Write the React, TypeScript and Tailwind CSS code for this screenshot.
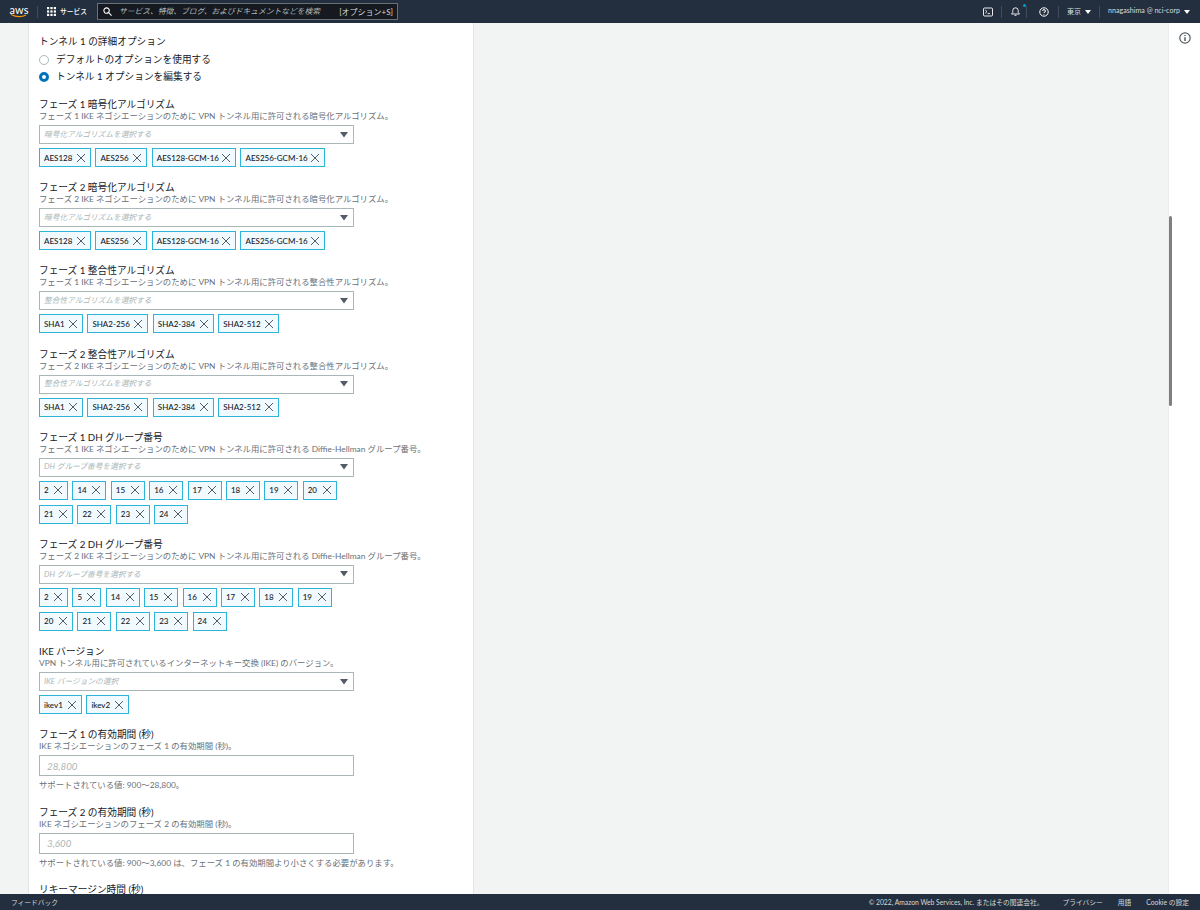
const jp = "font-['Lato','Noto_Sans_CJK_JP',sans-serif]";

function X() {
  return (
    <svg width="10" height="10" viewBox="0 0 10 10" className="shrink-0">
      <path d="M1 1 L9 9 M9 1 L1 9" stroke="#545b64" strokeWidth="1" fill="none" />
    </svg>
  );
}

function Tag({ label, w }: { label: string; w: number }) {
  return (
    <div
      className="flex h-[19px] items-center justify-between whitespace-nowrap border border-[#2cb5d8] bg-[#f1faff] pl-[4px] pr-[4px] text-[8px] font-medium text-[#16191f]"
      style={{ width: w }}
    >
      <span>{label}</span>
      <X />
    </div>
  );
}

function Select({ placeholder }: { placeholder: string }) {
  return (
    <div className="flex h-[19px] w-[315px] items-center justify-between border border-[#aab7b8] bg-white pl-[4px] pr-[5px]">
      <span className="text-[7.7px] italic text-[#aab7b8]">{placeholder}</span>
      <svg width="8" height="6" viewBox="0 0 8 6">
        <path d="M0 0 H8 L4 5.5 Z" fill="#545b64" />
      </svg>
    </div>
  );
}

type T = [string, number];
function Section(props: { title: string; desc: string; ph: string; rows: T[][]; cls: string }) {
  return (
    <section className={props.cls}>
      <h3 className="h-[13px] text-[9.7px] leading-[13px] text-[#16191f]">{props.title}</h3>
      <p className="h-[11px] text-[8.4px] leading-[11px] text-[#687078]">{props.desc}</p>
      <div className="mt-[3px]">
        <Select placeholder={props.ph} />
      </div>
      <div className="mt-[4px] flex flex-col gap-[5px]">
        {props.rows.map((r, i) => (
          <div key={i} className="flex gap-[4.4px]">
            {r.map(([l, w]) => (
              <Tag key={l} label={l} w={w} />
            ))}
          </div>
        ))}
      </div>
    </section>
  );
}

function NumberField(props: { title: string; desc: string; value: string; hint: string; cls: string }) {
  return (
    <section className={props.cls}>
      <h3 className="h-[13px] text-[9.7px] leading-[13px] text-[#16191f]">{props.title}</h3>
      <p className="h-[11px] text-[8.4px] leading-[11px] text-[#687078]">{props.desc}</p>
      <div className="mt-[3px] flex h-[21px] w-[315px] items-center border border-[#aab7b8] bg-white pl-[7px] text-[9.75px] italic text-[#aab7b8]">
        {props.value}
      </div>
      <p className="mt-[4px] h-[11px] text-[8.4px] leading-[11px] text-[#687078]">{props.hint}</p>
    </section>
  );
}

const aes: T[] = [["AES128", 52], ["AES256", 52], ["AES128-GCM-16", 84.3], ["AES256-GCM-16", 84.3]];
const sha: T[] = [["SHA1", 44], ["SHA2-256", 61], ["SHA2-384", 61], ["SHA2-512", 61]];
const n = (a: number[]): T[] => a.map((x) => [String(x), x < 10 ? 29 : 34]);

export default function App() {
  return (
    <div className={`flex h-[910px] w-[1200px] flex-col overflow-hidden bg-[#f2f3f3] ${jp}`}>
      <header className="flex h-[23px] shrink-0 items-center bg-[#232f3e] text-white">
        <div className="ml-[10px] flex w-[18px] flex-col items-center">
          <span className="text-[11px] font-normal leading-[8px]">aws</span>
          <svg width="18" height="4" viewBox="0 0 18 4">
            <path d="M1 0.5 Q9 4.5 16 1" stroke="#ff9900" strokeWidth="1.1" fill="none" />
          </svg>
        </div>
        <div className="ml-[9px] h-[12px] w-px bg-[#414d5c]" />
        <svg width="9" height="9" viewBox="0 0 9 9" className="ml-[9px]" fill="#fff">
          {[0, 3.4, 6.8].flatMap((x) =>
            [0, 3.4, 6.8].map((y) => <rect key={`${x}-${y}`} x={x} y={y} width="2.2" height="2.2" />)
          )}
        </svg>
        <span className="ml-[4px] text-[6.75px] font-medium">サービス</span>
        <div className="ml-[10px] flex h-[17px] w-[301px] items-center border border-[#687078] bg-[#16191f] pl-[5px] pr-[4px]">
          <svg width="9" height="9" viewBox="0 0 10 10" fill="none" stroke="#fff" strokeWidth="1.2">
            <circle cx="4" cy="4" r="3" />
            <path d="M6.3 6.3 L9.5 9.5" />
          </svg>
          <span className="ml-[7px] flex-1 text-[7.75px] italic text-[#aab7b8]">サービス、特徴、ブログ、およびドキュメントなどを検索</span>
          <span className="text-[8px] text-[#d5dbdb]">[オプション+S]</span>
        </div>
        <div className="ml-auto flex items-center">
          <svg width="10" height="10" viewBox="0 0 10 10" fill="none" stroke="#fff" strokeWidth="0.9">
            <rect x="0.5" y="1" width="9" height="8" rx="1" />
            <path d="M2.3 3 L4 4.6 L2.3 6.2 M4.6 6.6 H7" />
          </svg>
          <div className="ml-[8px] mr-[8px] h-[12px] w-px bg-[#414d5c]" />
          <div className="relative">
            <svg width="11" height="11" viewBox="0 0 11 11" fill="none" stroke="#fff" strokeWidth="0.9">
              <path d="M1.5 8 H9.5 L8.2 6.5 V4.5 A2.7 2.7 0 0 0 2.8 4.5 V6.5 Z M4.5 9.3 H6.5" />
            </svg>
            <span className="absolute right-[-5px] top-[-2px] h-[3px] w-[3px] rounded-full bg-[#00a1c9]" />
          </div>
          <div className="ml-[5px] mr-[12px] h-[12px] w-px bg-[#414d5c]" />
          <svg width="10" height="10" viewBox="0 0 10 10" fill="none" stroke="#fff" strokeWidth="1">
            <circle cx="5" cy="5" r="4.2" />
            <path d="M3.6 4 A1.4 1.4 0 1 1 5 5.4 V6.1 M5 7 V7.8" />
          </svg>
          <div className="ml-[9px] mr-[8px] h-[12px] w-px bg-[#414d5c]" />
          <span className="text-[7px] text-[#d5dbdb]">東京</span>
          <svg width="6" height="4" viewBox="0 0 6 4" className="ml-[4px]">
            <path d="M0 0 H6 L3 4 Z" fill="#fff" />
          </svg>
          <div className="ml-[8px] mr-[8px] h-[12px] w-px bg-[#414d5c]" />
          <span className="text-[7.1px] text-[#d5dbdb]">nnagashima @ nci-corp</span>
          <svg width="6" height="4" viewBox="0 0 6 4" className="ml-[4px] mr-[10px]">
            <path d="M0 0 H6 L3 4 Z" fill="#fff" />
          </svg>
        </div>
      </header>

      <div className="relative flex min-h-0 flex-1">
        <main className="flex-1 overflow-hidden pl-[28px]">
          <div className="h-full w-[446px] border-x border-[#e2e5e5] bg-white pl-[10px] pt-[12px]">
            <h2 className="h-[13px] text-[9.7px] leading-[13px] text-[#16191f]">トンネル 1 の詳細オプション</h2>
            <div className="mt-[5px] flex h-[13px] items-center gap-[7px] text-[9.7px] text-[#16191f]">
              <span className="h-[10px] w-[10px] rounded-full border border-[#aab7b8] bg-white" />
              デフォルトのオプションを使用する
            </div>
            <div className="mt-[4px] flex h-[13px] items-center gap-[7px] text-[9.7px] text-[#16191f]">
              <span className="h-[10px] w-[10px] rounded-full border-[3px] border-[#0073bb] bg-white" />
              トンネル 1 オプションを編集する
            </div>

            <Section cls="mt-[15px]" title="フェーズ 1 暗号化アルゴリズム" desc="フェーズ 1 IKE ネゴシエーションのために VPN トンネル用に許可される暗号化アルゴリズム。" ph="暗号化アルゴリズムを選択する" rows={[aes]} />
            <Section cls="mt-[14.2px]" title="フェーズ 2 暗号化アルゴリズム" desc="フェーズ 2 IKE ネゴシエーションのために VPN トンネル用に許可される暗号化アルゴリズム。" ph="暗号化アルゴリズムを選択する" rows={[aes]} />
            <Section cls="mt-[14.2px]" title="フェーズ 1 整合性アルゴリズム" desc="フェーズ 1 IKE ネゴシエーションのために VPN トンネル用に許可される整合性アルゴリズム。" ph="整合性アルゴリズムを選択する" rows={[sha]} />
            <Section cls="mt-[14.2px]" title="フェーズ 2 整合性アルゴリズム" desc="フェーズ 2 IKE ネゴシエーションのために VPN トンネル用に許可される整合性アルゴリズム。" ph="整合性アルゴリズムを選択する" rows={[sha]} />
            <Section cls="mt-[14.2px]" title="フェーズ 1 DH グループ番号" desc="フェーズ 1 IKE ネゴシエーションのために VPN トンネル用に許可される Diffie-Hellman グループ番号。" ph="DH グループ番号を選択する" rows={[n([2, 14, 15, 16, 17, 18, 19, 20]), n([21, 22, 23, 24])]} />
            <Section cls="mt-[14.2px]" title="フェーズ 2 DH グループ番号" desc="フェーズ 2 IKE ネゴシエーションのために VPN トンネル用に許可される Diffie-Hellman グループ番号。" ph="DH グループ番号を選択する" rows={[n([2, 5, 14, 15, 16, 17, 18, 19]), n([20, 21, 22, 23, 24])]} />
            <Section cls="mt-[14.2px]" title="IKE バージョン" desc="VPN トンネル用に許可されているインターネットキー交換 (IKE) のバージョン。" ph="IKE バージョンの選択" rows={[[["ikev1", 43], ["ikev2", 43]]]} />
            <NumberField cls="mt-[14.2px]" title="フェーズ 1 の有効期間 (秒)" desc="IKE ネゴシエーションのフェーズ 1 の有効期間 (秒)。" value="28,800" hint="サポートされている値: 900〜28,800。" />
            <NumberField cls="mt-[14.2px]" title="フェーズ 2 の有効期間 (秒)" desc="IKE ネゴシエーションのフェーズ 2 の有効期間 (秒)。" value="3,600" hint="サポートされている値: 900〜3,600 は、フェーズ 1 の有効期間より小さくする必要があります。" />
            <h3 className="mt-[14.2px] text-[9.7px] leading-[13px] text-[#16191f]">リキーマージン時間 (秒)</h3>
          </div>
        </main>
        <aside className="flex w-[32px] shrink-0 justify-center border-l border-[#eaeded] bg-white pt-[9px]">
          <svg width="12" height="12" viewBox="0 0 12 12" fill="none" stroke="#545b64" strokeWidth="1.2">
            <circle cx="6" cy="6" r="5.2" />
            <path d="M6 5.2 V9 M6 3 V4" strokeWidth="1.5" />
          </svg>
        </aside>
        <div className="absolute left-[1169px] top-[193px] h-[190px] w-[3px] rounded-full bg-[#7f7f7f]" />
      </div>

      <footer className="flex h-[16px] shrink-0 items-center bg-[#232f3e] pl-[11px] pr-[11px] text-[6.75px] text-[#d5dbdb]">
        <span>フィードバック</span>
        <span className="ml-auto">© 2022, Amazon Web Services, Inc. またはその関連会社。</span>
        <span className="ml-[19px]">プライバシー</span>
        <span className="ml-[15px]">用語</span>
        <span className="ml-[15px]">Cookie の設定</span>
      </footer>
    </div>
  );
}
